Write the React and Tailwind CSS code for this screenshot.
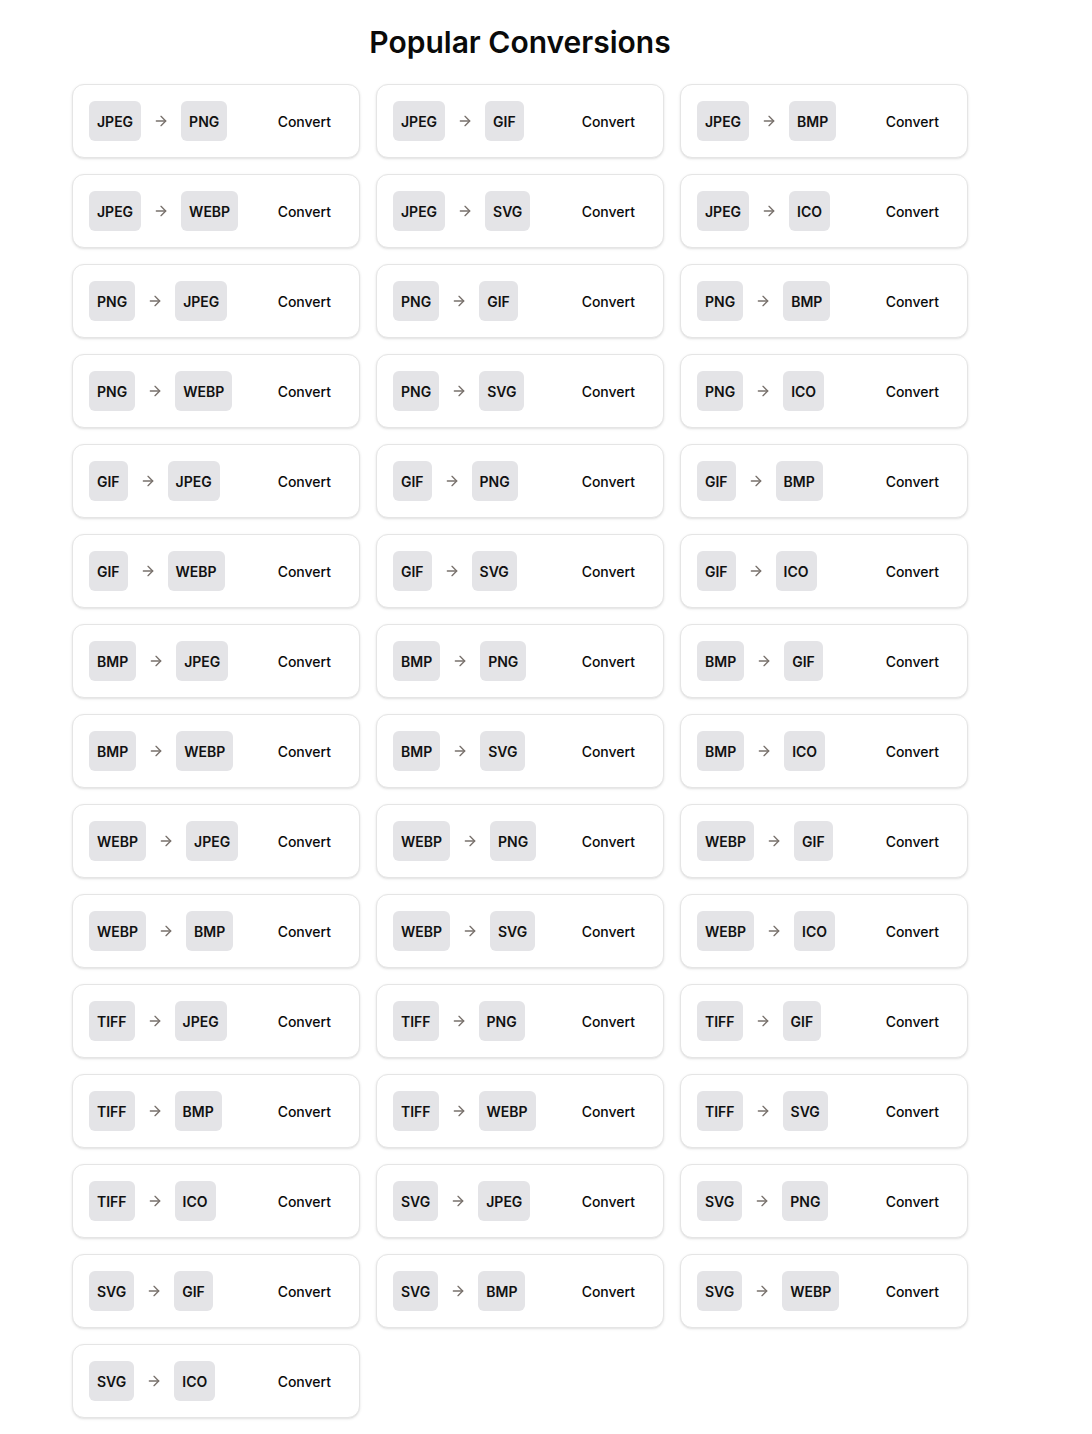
import React from "react";
import { ArrowRight } from "lucide-react";

const map = [
  ["JPEG", ["PNG", "GIF", "BMP", "WEBP", "SVG", "ICO"]],
  ["PNG", ["JPEG", "GIF", "BMP", "WEBP", "SVG", "ICO"]],
  ["GIF", ["JPEG", "PNG", "BMP", "WEBP", "SVG", "ICO"]],
  ["BMP", ["JPEG", "PNG", "GIF", "WEBP", "SVG", "ICO"]],
  ["WEBP", ["JPEG", "PNG", "GIF", "BMP", "SVG", "ICO"]],
  ["TIFF", ["JPEG", "PNG", "GIF", "BMP", "WEBP", "SVG", "ICO"]],
  ["SVG", ["JPEG", "PNG", "GIF", "BMP", "WEBP", "ICO"]],
];

const items = map.flatMap(([from, tos]) => tos.map((to) => [from, to]));

function Badge({ children }) {
  return (
    <span className="inline-flex h-10 items-center rounded-md bg-[#e4e4e7] px-2 pt-[2px] text-sm font-semibold text-[#111]">
      {children}
    </span>
  );
}

export default function App() {
  return (
    <div
      className="w-[1040px] bg-white pb-4 pt-6 text-[#0a0a0a]"
      style={{ fontFamily: "Inter, 'Noto Sans', sans-serif" }}
    >
      <h1 className="mb-6 text-center text-3xl font-semibold leading-9">Popular Conversions</h1>
      <div className="mx-auto grid w-[896px] grid-cols-3 gap-4">
        {items.map(([from, to], i) => (
          <div
            key={i}
            className="flex items-center justify-between rounded-xl border border-[#e5e5e5] bg-white p-4 shadow-sm"
          >
            <div className="flex items-center gap-3">
              <Badge>{from}</Badge>
              <ArrowRight className="h-4 w-4 text-[#78716c]" strokeWidth={2} />
              <Badge>{to}</Badge>
            </div>
            <button className="h-10 rounded-md px-3 pt-[2px] text-sm font-medium text-[#0a0a0a]">Convert</button>
          </div>
        ))}
      </div>
    </div>
  );
}
